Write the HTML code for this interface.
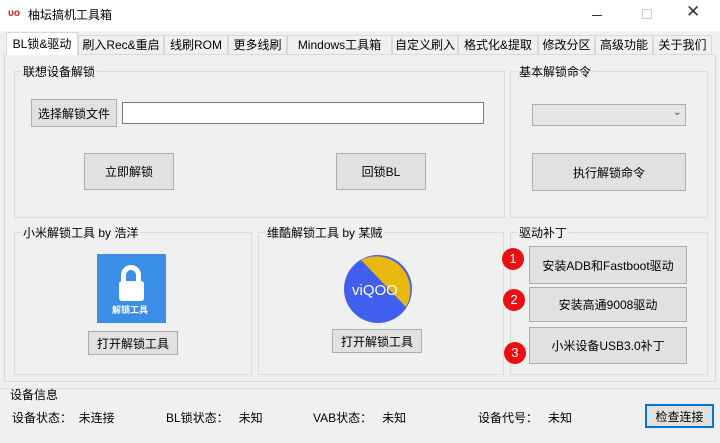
<!DOCTYPE html>
<html><head><meta charset="utf-8"><style>
*{box-sizing:border-box;margin:0;padding:0}
body{width:720px;height:443px;background:#f0f0f0;font-family:"Liberation Sans","Noto Sans CJK SC",sans-serif;font-size:12px;color:#000;position:relative;overflow:hidden}
.a{position:absolute}
.title{left:0;top:0;width:720px;height:31px;background:#fff}
.tab{position:absolute;top:35px;height:20px;border:1px solid #d9d9d9;background:#f0f0f0;font-size:12px;line-height:18px;text-align:center;white-space:nowrap;overflow:hidden}
.grp{position:absolute;border:1px solid #dcdcdc}
.grp span{position:absolute;top:-9px;left:6px;background:#f0f0f0;padding:0 2px;font-size:12px}
.btn{position:absolute;background:#e1e1e1;border:1px solid #adadad;text-align:center;font-size:12px;display:flex;align-items:center;justify-content:center}
.num{position:absolute;width:22px;height:22px;border-radius:50%;background:#e81010;color:#fff;font-size:13px;text-align:center;line-height:22px}
</style></head><body>
<div class="a title"></div>
<div class="a" style="left:8px;top:8px;color:#d22;font-size:10px;font-weight:bold">υo</div>
<div class="a" style="left:28px;top:6px;font-size:12px">柚坛搞机工具箱</div>
<div class="a" style="left:592px;top:15px;width:10px;height:1px;background:#333"></div>
<div class="a" style="left:642px;top:9px;width:10px;height:10px;border:1px solid #ccc"></div>
<div class="a" style="left:686px;top:2px;font-size:17px;color:#333">✕</div>
<div class="a" style="left:4px;top:54px;width:712px;height:328px;background:#f0f0f0;border:1px solid #d9d9d9"></div>
<div class="tab" style="left:78px;width:86px">刷入Rec&amp;重启</div>
<div class="tab" style="left:164px;width:64px">线刷ROM</div>
<div class="tab" style="left:228px;width:59px">更多线刷</div>
<div class="tab" style="left:287px;width:105px">Mindows工具箱</div>
<div class="tab" style="left:392px;width:66px">自定义刷入</div>
<div class="tab" style="left:458px;width:80px">格式化&amp;提取</div>
<div class="tab" style="left:538px;width:57px">修改分区</div>
<div class="tab" style="left:595px;width:58px">高级功能</div>
<div class="tab" style="left:653px;width:59px">关于我们</div>
<div class="tab" style="left:6px;top:32px;height:24px;width:72px;background:#fff;border-bottom:none;line-height:22px">BL锁&amp;驱动</div>
<div class="a" style="left:6px;top:55px;width:708px;height:326px;background:#f0f0f0"></div>

<div class="grp" style="left:14px;top:71px;width:491px;height:147px"><span>联想设备解锁</span></div>
<div class="grp" style="left:510px;top:71px;width:198px;height:147px"><span>基本解锁命令</span></div>
<div class="grp" style="left:14px;top:232px;width:238px;height:143px"><span>小米解锁工具 by 浩洋</span></div>
<div class="grp" style="left:258px;top:232px;width:246px;height:143px"><span>维酷解锁工具 by 某贼</span></div>
<div class="grp" style="left:510px;top:232px;width:198px;height:143px"><span>驱动补丁</span></div>

<div class="btn" style="left:31px;top:99px;width:86px;height:28px">选择解锁文件</div>
<div class="a" style="left:122px;top:102px;width:362px;height:22px;background:#fff;border:1px solid #7a7a7a"></div>
<div class="btn" style="left:84px;top:153px;width:90px;height:37px">立即解锁</div>
<div class="btn" style="left:336px;top:153px;width:90px;height:37px">回锁BL</div>
<div class="a" style="left:532px;top:104px;width:154px;height:22px;background:#e5e5e5;border:1px solid #adadad"></div>
<div class="a" style="left:673px;top:107px;font-size:10px;color:#444">⌄</div>
<div class="btn" style="left:532px;top:153px;width:154px;height:38px">执行解锁命令</div>

<div class="a" style="left:97px;top:254px;width:69px;height:69px;background:#3a8ee6"></div>
<div class="a" style="left:121px;top:265px;width:20px;height:18px;border:5px solid #fff;border-bottom:none;border-radius:10px 10px 0 0"></div>
<div class="a" style="left:119px;top:281px;width:25px;height:20px;background:#fff;border-radius:3px"></div>
<div class="a" style="left:112px;top:303px;color:#fff;font-size:9px;font-weight:bold">解锁工具</div>
<div class="btn" style="left:88px;top:331px;width:90px;height:24px">打开解锁工具</div>

<svg class="a" style="left:344px;top:255px" width="68" height="68" viewBox="0 0 68 68">
<circle cx="34" cy="34" r="34" fill="#415fee"/>
<path d="M17 5 A34 34 0 0 1 62 52 Z" fill="#e8b810"/>
<text x="8" y="40" fill="#fff" font-size="15" font-family="Liberation Sans">viQOO</text>
</svg>
<div class="btn" style="left:332px;top:329px;width:90px;height:24px">打开解锁工具</div>

<div class="btn" style="left:529px;top:246px;width:158px;height:38px">安装ADB和Fastboot驱动</div>
<div class="btn" style="left:529px;top:287px;width:158px;height:35px">安装高通9008驱动</div>
<div class="btn" style="left:529px;top:327px;width:158px;height:37px">小米设备USB3.0补丁</div>
<div class="num" style="left:502px;top:248px">1</div>
<div class="num" style="left:503px;top:289px">2</div>
<div class="num" style="left:504px;top:342px">3</div>

<div class="a" style="left:0;top:388px;width:720px;height:1px;background:#dcdcdc"></div>
<div class="a" style="left:10px;top:386px">设备信息</div>
<div class="a" style="left:12px;top:409px">设备状态：&nbsp;&nbsp;未连接</div>
<div class="a" style="left:166px;top:409px">BL锁状态：&nbsp;&nbsp;&nbsp;未知</div>
<div class="a" style="left:313px;top:409px">VAB状态：&nbsp;&nbsp;&nbsp;未知</div>
<div class="a" style="left:478px;top:409px">设备代号：&nbsp;&nbsp;&nbsp;未知</div>
<div class="btn" style="left:645px;top:404px;width:69px;height:24px;border:2px solid #0078d7">检查连接</div>
</body></html>
